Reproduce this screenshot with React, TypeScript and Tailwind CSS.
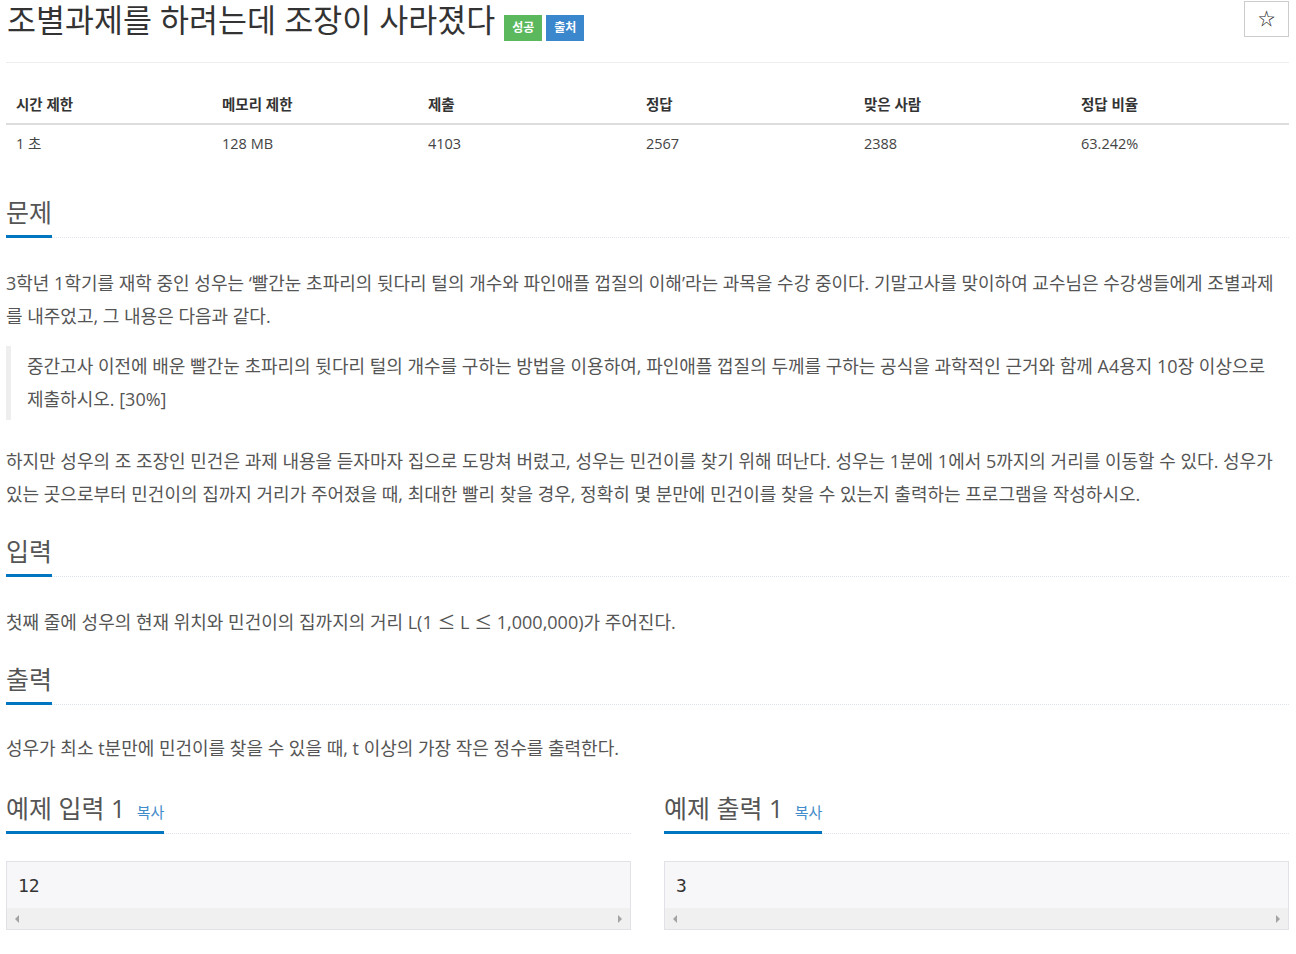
import React from 'react';

const FONT = '"Open Sans", "Noto Sans CJK KR", sans-serif';

function Headline({ children, className = '' }: { children: React.ReactNode; className?: string }) {
  return (
    <div className={`border-b border-dotted border-[#dfe4ec] ${className}`}>
      <h2 className="inline-block -mb-px border-b-[3px] border-[#0076c0] pb-[8px] text-[25px] leading-[30px] font-normal text-[#555]">
        {children}
      </h2>
    </div>
  );
}

function Arrow({ dir }: { dir: 'left' | 'right' }) {
  return (
    <svg width="5" height="8" viewBox="0 0 5 8">
      {dir === 'left' ? <path d="M4 0 L0 4 L4 8 Z" fill="#a3a3a3" /> : <path d="M1 0 L5 4 L1 8 Z" fill="#a3a3a3" />}
    </svg>
  );
}

function SampleBox({ value }: { value: string }) {
  return (
    <div className="mt-[27px] border border-[#e1e1e8] bg-[#f7f7f9]">
      <div className="h-[46px] pl-[11px] pt-[12px] text-[18px] leading-[24px] text-[#333]" style={{ fontFamily: 'Consolas, "DejaVu Sans Mono", monospace' }}>
        {value}
      </div>
      <div className="flex h-[21px] items-center justify-between bg-[#f0f0f0] px-[8px]">
        <Arrow dir="left" />
        <Arrow dir="right" />
      </div>
    </div>
  );
}

const Le = () => <span style={{ fontFamily: '"Noto Sans CJK KR", sans-serif' }}>≤</span>;

const stats = [
  ['시간 제한', '1 초', 'w-[206px]'],
  ['메모리 제한', '128 MB', 'w-[206px]'],
  ['제출', '4103', 'w-[218px]'],
  ['정답', '2567', 'w-[218px]'],
  ['맞은 사람', '2388', 'w-[217px]'],
  ['정답 비율', '63.242%', 'flex-1'],
];

export default function App() {
  return (
    <div className="min-h-screen bg-white pl-[6px] pr-[7px] text-[#555]" style={{ fontFamily: FONT }}>
      {/* title */}
      <div className="flex items-start justify-between">
        <div className="flex items-start">
          <h1 className="pl-[1px] text-[31.5px] leading-[40px] font-normal text-[#333]">조별과제를 하려는데 조장이 사라졌다</h1>
          <span className="ml-[9px] mt-[15px] flex h-[26px] w-[38px] items-center justify-center bg-[#5cb85c] text-[12px] font-bold text-white">성공</span>
          <span className="ml-[4px] mt-[15px] flex h-[26px] w-[38px] items-center justify-center bg-[#3a87cd] text-[12px] font-bold text-white">출처</span>
        </div>
        <button className="mt-[1px] flex h-[36px] w-[45px] items-center justify-center border border-[#ccc] bg-white text-[17px] text-[#222]">☆</button>
      </div>
      <div className="mt-[21px] border-t border-[#eee]" />

      {/* stats table */}
      <div className="mt-[24px] text-[14.5px]">
        <div className="flex border-b-2 border-[#ddd]">
          {stats.map(([h, , w]) => (
            <div key={h} className={`${w} py-[8px] pl-[10px] leading-[20px] font-bold text-[#333]`}>{h}</div>
          ))}
        </div>
        <div className="flex">
          {stats.map(([h, v, w]) => (
            <div key={h} className={`${w} pt-[9px] pb-[8px] pl-[10px] leading-[20px] text-[#444]`}>{v}</div>
          ))}
        </div>
      </div>

      {/* problem */}
      <Headline className="mt-[35px]">문제</Headline>
      <div className="text-[18px] leading-[33px]">
        <p className="mt-[29px]">
          3학년 1학기를 재학 중인 성우는 ‘빨간눈 초파리의 뒷다리 털의 개수와 파인애플 껍질의 이해’라는 과목을 수강 중이다. 기말고사를 맞이하여 교수님은 수강생들에게 조별과제를 내주었고, 그 내용은 다음과 같다.
        </p>
        <blockquote className="mt-[13px] border-l-[5px] border-[#eee] py-[4px] pl-[16px] pr-[10px]">
          중간고사 이전에 배운 빨간눈 초파리의 뒷다리 털의 개수를 구하는 방법을 이용하여, 파인애플 껍질의 두께를 구하는 공식을 과학적인 근거와 함께 A4용지 10장 이상으로 제출하시오. [30%]
        </blockquote>
        <p className="mt-[25px]">
          하지만 성우의 조 조장인 민건은 과제 내용을 듣자마자 집으로 도망쳐 버렸고, 성우는 민건이를 찾기 위해 떠난다. 성우는 1분에 1에서 5까지의 거리를 이동할 수 있다. 성우가 있는 곳으로부터 민건이의 집까지 거리가 주어졌을 때, 최대한 빨리 찾을 경우, 정확히 몇 분만에 민건이를 찾을 수 있는지 출력하는 프로그램을 작성하시오.
        </p>
      </div>

      {/* input */}
      <Headline className="mt-[25px]">입력</Headline>
      <p className="mt-[28px] text-[18px] leading-[33px]">
        첫째 줄에 성우의 현재 위치와 민건이의 집까지의 거리 L(1 <Le /> L <Le /> 1,000,000)가 주어진다.
      </p>

      {/* output */}
      <Headline className="mt-[25px]">출력</Headline>
      <p className="mt-[27px] text-[18px] leading-[33px]">성우가 최소 t분만에 민건이를 찾을 수 있을 때, t 이상의 가장 작은 정수를 출력한다.</p>

      {/* samples */}
      <div className="mt-[28px] grid grid-cols-2 gap-x-[33px]">
        <div>
          <Headline>
            예제 입력 1 <a className="ml-[5px] text-[15px] leading-none text-[#428bca]">복사</a>
          </Headline>
          <SampleBox value="12" />
        </div>
        <div>
          <Headline>
            예제 출력 1 <a className="ml-[5px] text-[15px] leading-none text-[#428bca]">복사</a>
          </Headline>
          <SampleBox value="3" />
        </div>
      </div>
    </div>
  );
}
